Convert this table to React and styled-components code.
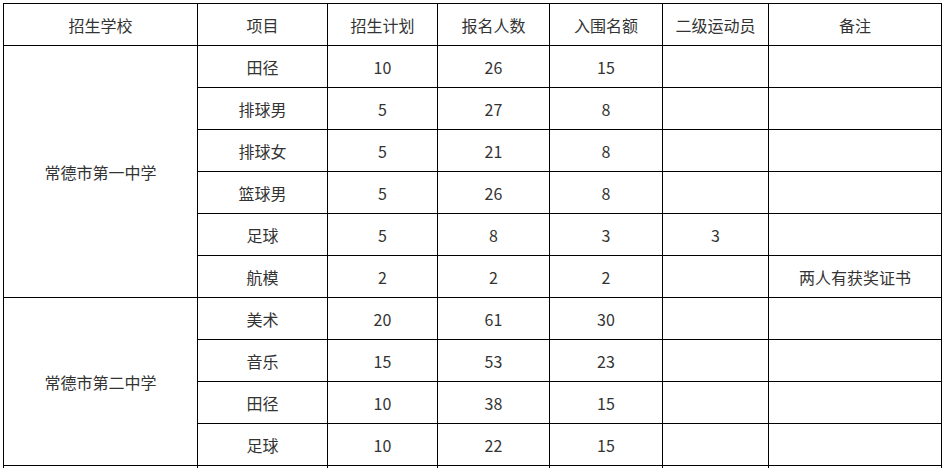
import React from 'react';
import styled, { createGlobalStyle } from 'styled-components';

const GlobalStyle = createGlobalStyle`
  html, body {
    margin: 0;
    padding: 0;
    background: #ffffff;
  }
  body {
    padding: 3px 0 0 3px;
    font-family: "Noto Sans CJK SC", "Noto Sans", sans-serif;
  }
`;

const columns = [194, 130, 110, 112, 113, 106, 173];
const headers = ['招生学校', '项目', '招生计划', '报名人数', '入围名额', '二级运动员', '备注'];

const schools = [
  {
    name: '常德市第一中学',
    rows: [
      ['田径', '10', '26', '15', '', ''],
      ['排球男', '5', '27', '8', '', ''],
      ['排球女', '5', '21', '8', '', ''],
      ['篮球男', '5', '26', '8', '', ''],
      ['足球', '5', '8', '3', '3', ''],
      ['航模', '2', '2', '2', '', '两人有获奖证书'],
    ],
  },
  {
    name: '常德市第二中学',
    rows: [
      ['美术', '20', '61', '30', '', ''],
      ['音乐', '15', '53', '23', '', ''],
      ['田径', '10', '38', '15', '', ''],
      ['足球', '10', '22', '15', '', ''],
    ],
  },
  {
    name: '',
    rows: [['', '', '', '', '', '']],
  },
];

const App = () => {
  return (
    <>
      <GlobalStyle />
      <Table>
        <colgroup>
          {columns.map((w, i) => (
            <col key={i} style={{ width: w }} />
          ))}
        </colgroup>
        <thead>
          <Row>
            {headers.map((h) => (
              <HeadCell key={h}>{h}</HeadCell>
            ))}
          </Row>
        </thead>
        <tbody>
          {schools.map((school, s) =>
            school.rows.map((row, i) => (
              <Row key={s + '-' + i}>
                {i === 0 && <Cell rowSpan={school.rows.length}>{school.name}</Cell>}
                {row.map((value, j) => (
                  <Cell key={j}>{value}</Cell>
                ))}
              </Row>
            ))
          )}
        </tbody>
      </Table>
    </>
  );
};

const Table = styled.table`
  width: 938px;
  table-layout: fixed;
  border-collapse: collapse;
  border: 1px solid #000000;
  color: #333333;
  font-size: 16px;
`;

const Row = styled.tr`
  height: 42px;
`;

const Cell = styled.td`
  border: 1px solid #000000;
  padding: 0 4px;
  text-align: center;
  vertical-align: middle;
  line-height: 24px;
  white-space: nowrap;
  overflow: hidden;
`;

const HeadCell = styled(Cell).attrs({ as: 'th' })`
  font-weight: 400;
`;

export default App;
